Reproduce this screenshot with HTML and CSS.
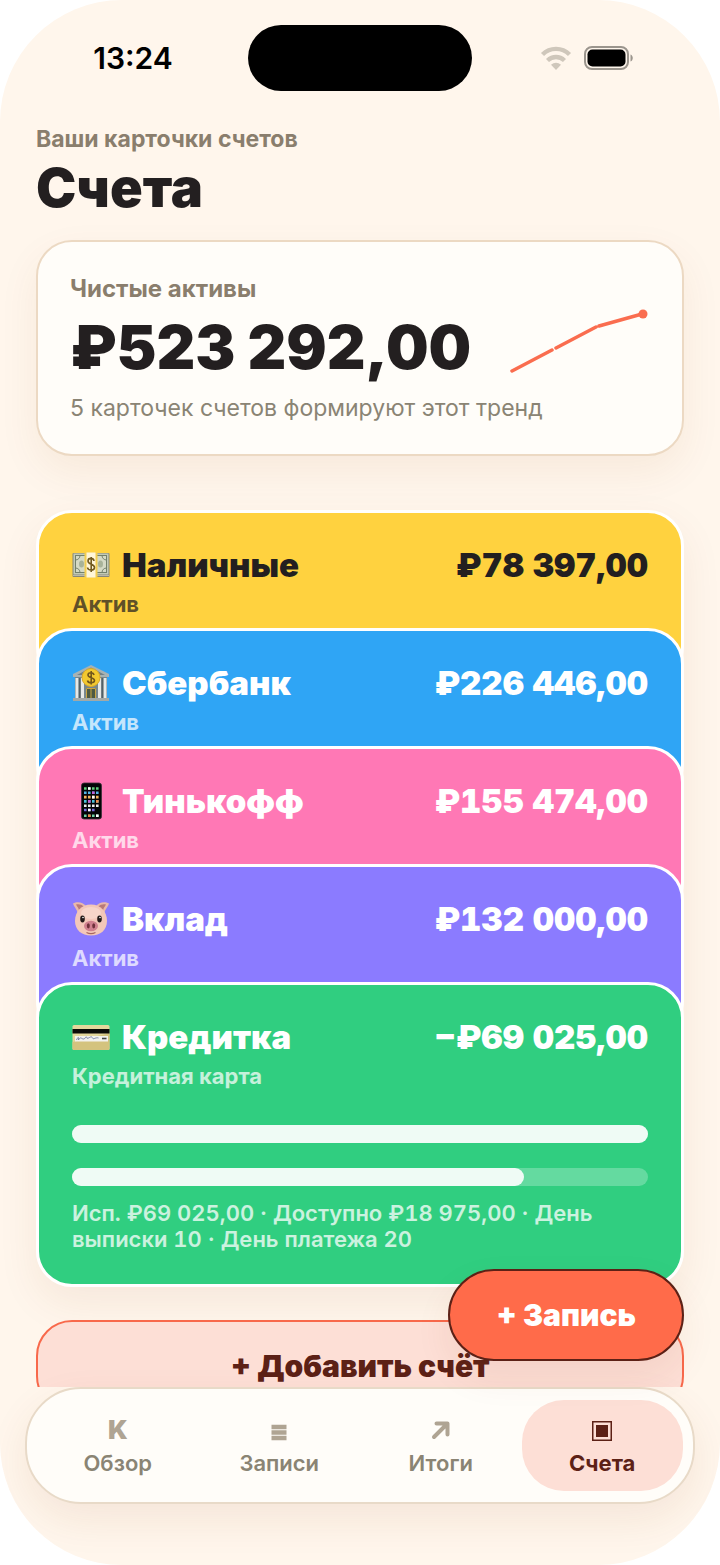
FILE: index.html
```html
<!DOCTYPE html>
<html lang="ru">
<head>
  <meta charset="UTF-8">
  <meta name="viewport" content="width=device-width, initial-scale=1.0">
  <title>Счета</title>
  <link rel="stylesheet" href="styles.css">
</head>
<body>

  <div class="phone">

    <div class="status-bar">
      <span class="time">13:24</span>
      <span class="island"></span>
      <span class="status-icons">
        <svg width="32" height="24" viewBox="0 0 32 24" fill="none" stroke="#cfc7bb" stroke-width="4.400">
          <path d="M2.500 8.500C10 1 22 1 29.500 8.500"/>
          <path d="M7.500 14.500C12.500 9.800 19.500 9.800 24.500 14.500"/>
          <path d="M16 24L11 18.800C14 16 18 16 21 18.800Z" fill="#cfc7bb" stroke="none"/>
        </svg>
        <svg width="50" height="24" viewBox="0 0 50 24">
          <rect x="1" y="1" width="43" height="22" rx="7" fill="none" stroke="#9b958d" stroke-width="2"/>
          <rect x="3.500" y="3.500" width="38" height="17" rx="5" fill="#000"/>
          <path d="M46.500 8.500C49.500 9.500 49.500 14.500 46.500 15.500Z" fill="#9b958d"/>
        </svg>
      </span>
    </div>

    <main class="content">
      <header class="page-head">
        <p class="eyebrow">Ваши карточки счетов</p>
        <h1>Счета</h1>
      </header>

      <section class="summary">
        <h2 class="summary-title">Чистые активы</h2>
        <div class="summary-row">
          <span class="summary-amount">₽523&nbsp;292,00</span>
          <svg class="trend" width="140" height="76" viewBox="0 0 140 76" stroke="#fa6d4f" stroke-width="3.500" stroke-linecap="round">
            <path d="M2 62L42 41M46 39L86 18M89 17L132 5"/>
            <circle cx="133" cy="5" r="4.500" fill="#fa6d4f" stroke="none"/>
          </svg>
        </div>
        <p class="summary-note">5 карточек счетов формируют этот тренд</p>
      </section>

      <section class="stack">
        <article class="account cash">
          <div class="account-row">
            <svg class="emoji" viewBox="0 0 38 38">
              <rect x="0.500" y="7" width="37" height="24" rx="1" fill="#85877a"/>
              <rect x="1.500" y="7.500" width="35" height="21" fill="#c3cbb4"/>
              <rect x="3.500" y="9.500" width="31" height="17" fill="#d5dac5" stroke="#73806b"/>
              <path d="M3.500 14a4.500 4.500 0 0 0 4.500-4.500M3.500 22a4.500 4.500 0 0 1 4.500 4.500M34.500 14a4.500 4.500 0 0 1-4.500-4.500M34.500 22a4.500 4.500 0 0 0-4.500 4.500" fill="none" stroke="#73806b"/>
              <ellipse cx="9.500" cy="18" rx="2.500" ry="3.500" fill="#a8b399"/>
              <ellipse cx="28.500" cy="18" rx="2.500" ry="3.500" fill="#a8b399"/>
              <path d="M1 29.500h36" stroke="#b9b8a8"/>
              <rect x="12.500" y="6.500" width="13" height="25" fill="#f2cd50"/>
              <rect x="14.500" y="6.500" width="9" height="25" fill="#fff6d8"/>
              <path d="M22 15c-.5-3.500-6-3.500-6 0 0 4 6.500 2.500 6.500 6.500 0 3.500-6.500 3.500-7 0M19.200 11v15" fill="none" stroke="#735b20" stroke-width="1.600"/>
            </svg>
            <h3>Наличные</h3>
            <span class="amount">₽78&nbsp;397,00</span>
          </div>
          <p class="kind">Актив</p>
        </article>

        <article class="account sber">
          <div class="account-row">
            <svg class="emoji" viewBox="0 0 38 38">
              <path d="M3 11h32v24H3z" fill="#77868b"/>
              <path d="M19 1L37 10v3H1v-3z" fill="#a7b2b3"/>
              <path d="M19 3.500L33 11H5z" fill="#718086"/>
              <path d="M5 14v20M10.500 14v20M27.500 14v20M33 14v20" stroke="#e6e9e7" stroke-width="3"/>
              <path d="M7.500 14v20M30.500 14v20" stroke="#536066" stroke-width="1.500"/>
              <path d="M14 24h10v11H14z" fill="#4d5a42"/>
              <path d="M14.500 35V24.500h9V35M19 25v10" fill="none" stroke="#caa642"/>
              <rect x="1" y="34" width="36" height="3" fill="#a2a9a7"/>
              <circle cx="19" cy="13.500" r="9" fill="#f3c92f" stroke="#dda926"/>
              <path d="M22 11c-.5-3-6-3-6 0 0 3.500 6.500 2 6.500 5.500 0 3-6.500 3-7 0M19.200 7v13.500" fill="none" stroke="#72561b" stroke-width="1.600"/>
            </svg>
            <h3>Сбербанк</h3>
            <span class="amount">₽226&nbsp;446,00</span>
          </div>
          <p class="kind">Актив</p>
        </article>

        <article class="account tinkoff">
          <div class="account-row">
            <svg class="emoji" viewBox="0 0 38 38">
              <rect x="9.500" y="1" width="20" height="36" rx="2.500" fill="#050507" stroke="#3c3038" stroke-width="0.800"/>
              <g stroke-width="2.600" stroke-dasharray="2.600 1.400">
                <path d="M12 6.500h14.600" stroke="#5fcf7a"/>
                <path d="M12 10.800h14.600" stroke="#55b7e8"/>
                <path d="M12 15.100h14.600" stroke="#f4b55c"/>
                <path d="M12 19.400h14.600" stroke="#4bc2d8"/>
                <path d="M12 23.700h14.600" stroke="#eeeeee"/>
                <path d="M12 28h10.600" stroke="#7a6be0"/>
                <path d="M12 33.800h14.600" stroke="#6fd3a5"/>
              </g>
              <path d="M16 6.500h2.600M16 28h2.600M24 33.800h2.600M20 15.100h2.600" stroke="#fff" stroke-width="2.600"/>
              <path d="M24 19.400h2.600M16 33.800h2.600" stroke="#f08a4b" stroke-width="2.600"/>
              <path d="M16 19.400h2.600M20 10.800h2.600" stroke="#c45fd6" stroke-width="2.600"/>
            </svg>
            <h3>Тинькофф</h3>
            <span class="amount">₽155&nbsp;474,00</span>
          </div>
          <p class="kind">Актив</p>
        </article>

        <article class="account deposit">
          <div class="account-row">
            <svg class="emoji" viewBox="0 0 38 38">
              <path d="M1 3.500C5 1 11 2 14 6L6 14C5 9 2 7 1 3.500zM37 3.500C33 1 27 2 24 6l8 8c1-5 4-7 5-10.500z" fill="#e9b8ab"/>
              <path d="M4 4.500c3-.5 6 0 8 2.500l-5 4C7 8 5 6.500 4 4.500zM34 4.500c-3-.5-6 0-8 2.500l5 4c0-3 2-4.500 3-6.500z" fill="#b97a78"/>
              <path d="M19 4.500c9.500 0 16 7 16 16.500 0 9-6.500 14.500-16 14.500S3 30 3 21C3 11.500 9.500 4.500 19 4.500z" fill="#f3c7b9"/>
              <ellipse cx="19" cy="13" rx="10" ry="6" fill="#f7d5c9"/>
              <ellipse cx="10.500" cy="19" rx="2.300" ry="3.400" fill="#221a18"/>
              <ellipse cx="27.500" cy="19" rx="2.300" ry="3.400" fill="#221a18"/>
              <circle cx="11" cy="17.500" r="0.800" fill="#fff"/>
              <circle cx="28" cy="17.500" r="0.800" fill="#fff"/>
              <ellipse cx="19" cy="26" rx="7" ry="5.300" fill="#d0808f"/>
              <ellipse cx="16.300" cy="25.800" rx="1.500" ry="2.600" fill="#6f303b"/>
              <ellipse cx="21.700" cy="25.800" rx="1.500" ry="2.600" fill="#6f303b"/>
              <path d="M14.500 32.500c3 1.500 6 1.500 9 0" fill="none" stroke="#a8675f" stroke-width="1.200"/>
            </svg>
            <h3>Вклад</h3>
            <span class="amount">₽132&nbsp;000,00</span>
          </div>
          <p class="kind">Актив</p>
        </article>

        <article class="account credit">
          <div class="account-row">
            <svg class="emoji" viewBox="0 0 38 38">
              <rect x="0.500" y="7" width="37" height="25" rx="1.500" fill="#e4d79c"/>
              <path d="M.5 24L37.500 15v15.500a1.500 1.500 0 0 1-1.500 1.500H2a1.500 1.500 0 0 1-1.500-1.500z" fill="#d4c37e"/>
              <rect x="0.500" y="11" width="37" height="4.500" fill="#0c0b08"/>
              <rect x="3" y="18" width="33" height="5.500" fill="#f3f2ee"/>
              <path d="M4.500 22c2-4 2-3 2 0 2-4 3-1 5-1s2-3 3-2 0 2 2 1 3-2 4 0 3-1 6 0" fill="none" stroke="#717aa2" stroke-width="0.900"/>
              <path d="M30 20.500h4.500" stroke="#444" stroke-width="1.600"/>
            </svg>
            <h3>Кредитка</h3>
            <span class="amount">−₽69&nbsp;025,00</span>
          </div>
          <p class="kind">Кредитная карта</p>
          <div class="bars">
            <div class="bar"><div class="bar-fill" style="width: 100%"></div></div>
            <div class="bar"><div class="bar-fill" style="width: 78.4%"></div></div>
          </div>
          <p class="details">Исп. ₽69&nbsp;025,00 · Доступно ₽18&nbsp;975,00 · День выписки 10 · День платежа 20</p>
        </article>
      </section>

      <button class="add-button" type="button">+ Добавить счёт</button>
    </main>

    <div class="bottom">
      <button class="record-button" type="button">+ Запись</button>
      <nav class="tabs">
        <a class="tab" href="#overview">
          <span class="letter">K</span>
          Обзор
        </a>
        <a class="tab" href="#records">
          <svg width="20" height="24" viewBox="0 0 20 24" stroke="#afa493" stroke-width="4.400">
            <path d="M2.500 9h15M2.500 14.500h15M2.500 20h15"/>
          </svg>
          Записи
        </a>
        <a class="tab" href="#totals">
          <svg width="20" height="24" viewBox="0 0 20 24" fill="none" stroke="#afa493" stroke-width="4" stroke-linecap="round" stroke-linejoin="round">
            <path d="M3 19L16 6M5.500 5.500H16.500V16.500"/>
          </svg>
          Итоги
        </a>
        <a class="tab active" href="#accounts">
          <svg width="20" height="24" viewBox="0 0 20 24">
            <rect x="0.750" y="3.750" width="18.500" height="18.500" fill="none" stroke="#5c2116" stroke-width="1.500"/>
            <rect x="4" y="7" width="12" height="12" fill="#5c2116"/>
          </svg>
          Счета
        </a>
      </nav>
    </div>

  </div>

</body>
</html>
```
FILE: styles.css
```css
* {
  box-sizing: border-box;
}

body {
  margin: 0;
  background-color: #fff;
  color: #231f20;
  font-family: Inter, sans-serif;
}

h1, h2, h3, p {
  margin: 0;
}

button {
  font-family: inherit;
  cursor: pointer;
}

svg {
  flex: none;
}

.phone {
  display: flex;
  flex-direction: column;
  height: 100vh;
  border-radius: 122px;
  background-color: #fff6ec;
  overflow: hidden;
}

/* status bar */

.status-bar {
  display: grid;
  grid-template-columns: 1fr auto 1fr;
  align-items: center;
  padding-top: 25px;
  flex: none;
}

.time {
  padding-left: 18px;
  text-align: center;
  font-size: 30px;
  font-weight: 600;
  color: #000;
}

.island {
  width: 224px;
  height: 66px;
  border-radius: 33px;
  background-color: #000;
}

.status-icons {
  display: flex;
  align-items: center;
  justify-content: center;
  gap: 12px;
  padding-right: 18px;
}

/* scrolling content */

.content {
  flex: 1;
  min-height: 0;
  padding: 35px 36px 0;
  overflow: hidden;
}

.eyebrow {
  font-size: 23px;
  line-height: 26px;
  font-weight: 700;
  color: #8a7e6d;
}

h1 {
  margin-top: 6px;
  font-size: 54px;
  line-height: 60px;
  font-weight: 900;
}

.summary {
  margin-top: 22px;
  padding: 33px 32px 32px;
  border: 2px solid #ecd9c3;
  border-radius: 36px;
  background-color: #fffdf9;
  box-shadow: 0 16px 40px rgba(140, 70, 20, 0.07);
}

.summary-title {
  font-size: 24px;
  line-height: 28px;
  font-weight: 700;
  color: #8a7e6d;
}

.summary-row {
  display: flex;
  align-items: center;
  justify-content: space-between;
  margin-top: 6px;
}

.summary-amount {
  font-size: 60px;
  line-height: 64px;
  font-weight: 900;
  white-space: nowrap;
}

.summary-note {
  margin-top: 9px;
  font-size: 23px;
  line-height: 28px;
  color: #8a8474;
}

/* account cards */

.stack {
  margin-top: 54px;
  border-radius: 36px;
  box-shadow: 0 16px 40px rgba(140, 70, 20, 0.08);
}

.account {
  padding: 32px 33px 62px;
  border: 3px solid #fff;
  border-radius: 36px;
  color: #fff;
}

.account + .account {
  position: relative;
  margin-top: -54px;
}

.cash {
  background-color: #ffd23f;
  color: #231f20;
}

.sber {
  background-color: #2fa5f5;
}

.tinkoff {
  background-color: #ff78b5;
}

.deposit {
  background-color: #8b7bff;
}

.credit {
  padding-bottom: 32px;
  background-color: #30ce80;
}

.account-row {
  display: flex;
  align-items: center;
  gap: 12px;
}

.emoji {
  width: 38px;
  height: 38px;
}

h3, .amount {
  font-size: 33px;
  line-height: 40px;
  font-weight: 900;
}

.amount {
  margin-left: auto;
  font-variant-numeric: tabular-nums;
  white-space: nowrap;
}

.kind {
  margin-top: 6px;
  font-size: 22px;
  line-height: 26px;
  font-weight: 700;
  opacity: 0.72;
}

.bars {
  display: grid;
  gap: 25px;
  margin-top: 36px;
}

.bar {
  height: 18px;
  border-radius: 9px;
  background-color: rgba(255, 255, 255, 0.25);
}

.bar-fill {
  height: 100%;
  border-radius: 9px;
  background-color: #effbf5;
}

.details {
  margin-top: 14px;
  font-size: 22px;
  line-height: 26px;
  font-weight: 600;
  font-variant-numeric: tabular-nums;
  opacity: 0.75;
}

.add-button {
  display: block;
  width: 100%;
  height: 92px;
  margin-top: 33px;
  border: 2px solid #f8694b;
  border-radius: 36px;
  background-color: #fddfd6;
  color: #5c2116;
  font-size: 30px;
  font-weight: 900;
}

/* bottom bar */

.bottom {
  position: relative;
  flex: none;
  padding: 0 25px 61px;
}

.record-button {
  position: absolute;
  right: 36px;
  bottom: 204px;
  padding: 0 46px;
  height: 92px;
  border: 2px solid #5c2116;
  border-radius: 46px;
  background-color: #ff6b4a;
  color: #fff;
  font-size: 30px;
  font-weight: 900;
  box-shadow: 0 16px 36px rgba(140, 70, 20, 0.08);
}

.tabs {
  display: grid;
  grid-template-columns: repeat(4, 1fr);
  padding: 11px 10px;
  border: 2px solid #e8dac8;
  border-radius: 56px;
  background-color: #fffdf9;
  box-shadow: 0 16px 40px rgba(140, 70, 20, 0.09);
}

.tab {
  display: flex;
  flex-direction: column;
  align-items: center;
  gap: 8px;
  padding: 18px 0 14px;
  border-radius: 42px;
  color: #8a8474;
  font-size: 22px;
  line-height: 27px;
  font-weight: 600;
  text-decoration: none;
}

.letter {
  color: #afa493;
  font-size: 26px;
  line-height: 24px;
  font-weight: 900;
}

.active {
  background-color: #fddfd6;
  color: #5c2116;
  font-weight: 700;
}
```
